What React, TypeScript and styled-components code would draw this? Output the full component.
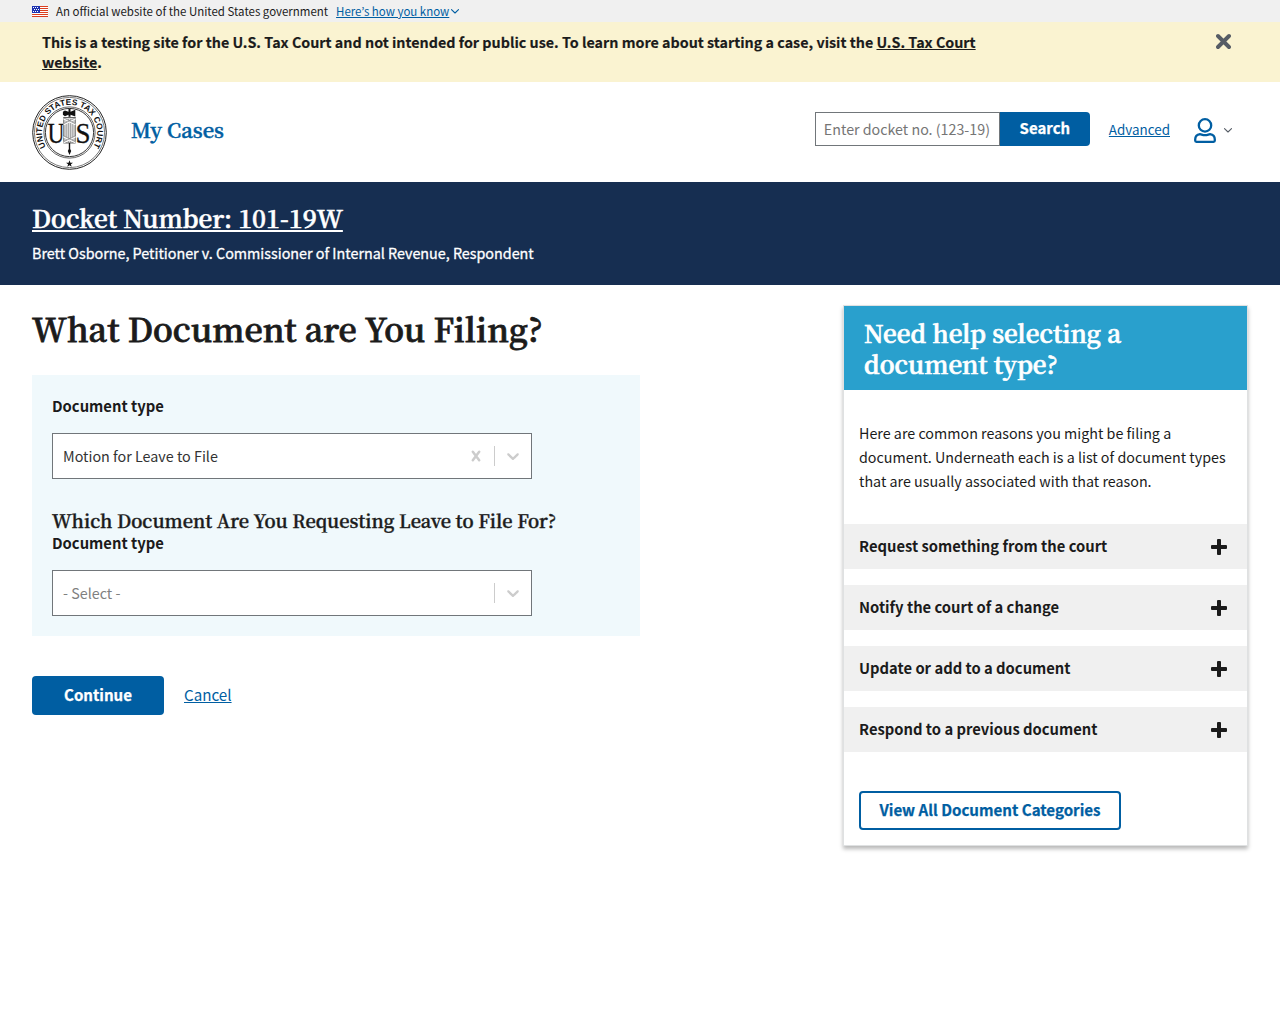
import React from "react";
import styled, { createGlobalStyle } from "styled-components";

const sans = '"Noto Sans CJK JP", "Noto Sans CJK SC", "Open Sans", sans-serif';
const serif = '"Noto Serif CJK JP", "Liberation Serif", serif';

const GlobalStyle = createGlobalStyle`
  * { box-sizing: border-box; }
  body { margin: 0; min-height: 1024px; background: #fff; color: #1b1b1b; font-family: ${sans}; font-size: 14.32px; }
  h1, h2, h3, p { margin: 0; }
  button, input { font-family: inherit; }
  a { color: #005ea2; text-underline-offset: 1px; }
`;

const GovBar = styled.div`
  display: flex;
  align-items: center;
  height: 22px;
  padding: 1px 32px 0;
  background: #f0f0f0;
  font-size: 11.47px;
  line-height: 21px;
  svg { display: block; }
`;
const GovText = styled.span`margin: 0 8px;`;
const GovLink = styled.a`display: flex; align-items: center; gap: 2px;`;

const TestBanner = styled.div`
  display: flex;
  justify-content: space-between;
  align-items: flex-start;
  height: 60px;
  padding: 10px 48px 0 42px;
  background: #faf3d1;
  font-weight: 700;
  font-size: 14.32px;
  line-height: 20px;
  -webkit-text-stroke: 0.15px;
  a { color: inherit; }
`;
const BannerText = styled.p`width: 960px;`;
const IconButton = styled.button`
  display: flex;
  align-items: center;
  padding: 0;
  border: 0;
  background: none;
`;
const CloseButton = styled(IconButton)`margin-top: 1px;`;

const Header = styled.header`
  display: flex;
  align-items: center;
  height: 100px;
  padding: 0 48px 0 32px;
`;
const NavLink = styled.a`
  margin: -4px auto 0 24px;
  font-family: ${serif};
  font-weight: 600;
  font-size: 20.26px;
  line-height: 28px;
  text-decoration: none;
  -webkit-text-stroke: 0.5px;
`;
const SearchForm = styled.form`display: flex; margin-top: -6px;`;
const SearchInput = styled.input`
  width: 185px;
  height: 34px;
  padding: 0 8px 2px;
  border: 1px solid #71767a;
  border-radius: 0;
  font-size: 14.28px;
  color: #1b1b1b;
  &::placeholder { color: #757575; opacity: 1; }
`;
const SearchButton = styled.button`
  width: 90px;
  height: 34px;
  padding: 0 0 2px;
  border: 0;
  border-radius: 0 4px 4px 0;
  background: #005ea2;
  color: #fff;
  font-weight: 700;
  font-size: 14.97px;
  line-height: 32px;
  -webkit-text-stroke: 0.25px;
`;
const AdvancedLink = styled.a`margin: -7px 24px 0 19px; font-size: 13.42px; line-height: 20px;`;
const AccountButton = styled(IconButton)`gap: 8px; margin-top: -3px;`;

const CaseBanner = styled.section`
  height: 103px;
  padding: 20px 32px 0;
  background: #162e51;
  color: #fff;
`;
const DocketTitle = styled.h2`
  font-family: ${serif};
  font-weight: 600;
  font-size: 24.37px;
  line-height: 32px;
  -webkit-text-stroke: 0.6px;
  a { color: inherit; text-decoration-thickness: 2px; text-underline-offset: 2px; }
`;
const CaseCaption = styled.p`
  margin-top: 7px;
  font-size: 14.34px;
  line-height: 24px;
  -webkit-text-stroke: 0.3px;
`;

const Main = styled.main`
  display: flex;
  justify-content: space-between;
  align-items: flex-start;
  padding: 20px 32px;
`;
const FilingColumn = styled.div`width: 608px;`;
const PageTitle = styled.h1`
  padding: 1px 0;
  font-family: ${serif};
  font-weight: 600;
  font-size: 32.36px;
  line-height: 44px;
  -webkit-text-stroke: 0.8px;
`;
const FormPanel = styled.section`
  height: 261px;
  margin-top: 24px;
  padding: 20px;
  background: #f0f9fc;
`;
const FieldLabel = styled.label`
  display: block;
  font-weight: 700;
  font-size: 14.8px;
  line-height: 22px;
`;
const SectionTitle = styled.h3`
  margin-top: 29px;
  font-family: ${serif};
  font-weight: 600;
  font-size: 18.24px;
  line-height: 24px;
  -webkit-text-stroke: 0.4px;
`;
const SelectBox = styled.div`
  display: flex;
  align-items: center;
  width: 480px;
  height: 46px;
  margin-top: 16px;
  padding: 0 8px 0 10px;
  border: 1px solid #71767a;
  background: #fff;
`;
const SelectValue = styled.span<{ $empty?: boolean }>`
  flex: 1;
  color: ${(p) => (p.$empty ? "#808080" : "#333")};
  font-size: 14.34px;
  line-height: 22px;
`;
const SelectDivider = styled.span`width: 1px; height: 20px; margin: 0 8px 0 10px; background: #ccc;`;

const Actions = styled.div`display: flex; align-items: center; margin-top: 40px; gap: 20px;`;
const PrimaryButton = styled.button`
  width: 132px;
  height: 39px;
  padding: 0 0 3px;
  border: 0;
  border-radius: 4px;
  background: #005ea2;
  color: #fff;
  font-weight: 700;
  font-size: 15.09px;
  -webkit-text-stroke: 0.25px;
`;
const CancelLink = styled.a`margin-top: -4px; font-size: 15.18px; line-height: 22px;`;

const HelpCard = styled.aside`
  width: 405px;
  height: 541px;
  border: 1px solid #dfe1e2;
  box-shadow: 0 3px 4px rgba(0, 0, 0, 0.28);
`;
const HelpTitle = styled.h2`
  height: 84px;
  padding: 11px 20px;
  background: #29a0cd;
  color: #fff;
  font-family: ${serif};
  font-weight: 600;
  font-size: 24.3px;
  line-height: 31px;
  -webkit-text-stroke: 0.7px;
`;
const HelpText = styled.p`
  width: 390px;
  padding: 31px 0 0 15px;
  font-size: 14.31px;
  line-height: 24px;
`;
const Accordion = styled.div`display: grid; gap: 16px; margin-top: 31px;`;
const AccordionRow = styled.button`
  display: flex;
  align-items: center;
  justify-content: space-between;
  height: 45px;
  padding: 0 20px 0 15px;
  border: 0;
  background: #f0f0f0;
  color: #1b1b1b;
  font-weight: 700;
  font-size: 14.77px;
`;
const RowLabel = styled.span`margin-top: -2px;`;
const OutlineButton = styled.button`
  width: 262px;
  height: 39px;
  margin: 39px 0 0 15px;
  padding: 0 0 3px;
  border: 2px solid #005ea2;
  border-radius: 4px;
  background: #fff;
  color: #005ea2;
  font-weight: 700;
  font-size: 15.1px;
  -webkit-text-stroke: 0.25px;
`;

const Flag = () => (
  <svg width="16" height="11" viewBox="0 0 16 11">
    <rect width="16" height="11" fill="#fff" />
    {[0, 2, 4, 6, 8, 10].map((y) => <rect key={y} y={y} width="16" height="1" fill="#db3e1f" />)}
    <rect width="8" height="7" fill="#1e33b1" />
    {[[1, 1], [3, 1], [5, 1], [2, 3], [4, 3], [6, 3], [1, 5], [3, 5], [5, 5]].map(([x, y]) => (
      <rect key={`${x}${y}`} x={x} y={y} width="1" height="1" fill="#fff" />
    ))}
  </svg>
);

const Chevron = ({ color, width = 8 }: { color: string; width?: number }) => (
  <svg width={width} height={width / 2 + 1} viewBox="0 0 8 5">
    <path d="M.5.7 4 4 7.5.7" fill="none" stroke={color} strokeWidth="1.1" strokeLinecap="round" strokeLinejoin="round" />
  </svg>
);

const SelectChevron = () => (
  <svg width="20" height="20" viewBox="0 0 20 20" fill="#ccc">
    <path d="M4.516 7.548c0.436-0.446 1.043-0.481 1.576 0l3.908 3.747 3.908-3.747c0.533-0.481 1.141-0.446 1.574 0 0.436 0.445 0.408 1.197 0 1.615-0.406 0.418-4.695 4.502-4.695 4.502-0.217 0.223-0.502 0.335-0.787 0.335s-0.57-0.112-0.789-0.335c0 0-4.287-4.084-4.695-4.502s-0.436-1.17 0-1.615z" />
  </svg>
);

const ClearIcon = () => (
  <svg width="16" height="12" viewBox="0 0 16 12">
    <path d="M4.8 1.8 11.2 10.2M11.2 1.8 4.8 10.2" stroke="#ccc" strokeWidth="2.5" strokeLinecap="round" />
  </svg>
);

const CloseIcon = () => (
  <svg width="17" height="16" viewBox="0 0 17 16">
    <path d="M3 3 14 14M14 3 3 14" stroke="#565c65" strokeWidth="3.9" strokeLinecap="round" />
  </svg>
);

const PlusIcon = () => (
  <svg width="16" height="16" viewBox="0 0 16 16" fill="#1b1b1b">
    <rect x="6" width="4" height="16" rx="1" />
    <rect y="6" width="16" height="4" rx="1" />
  </svg>
);

const UserIcon = () => (
  <svg width="22" height="25" viewBox="0 0 22 25" fill="none" stroke="#005ea2" strokeWidth="2.3">
    <circle cx="11" cy="7.4" r="6.2" />
    <path d="M6 16.2C3.2 16.6 1.2 18.8 1.2 21.6v1c0 .7.5 1.2 1.2 1.2h17.2c.7 0 1.2-.5 1.2-1.2v-1c0-2.8-2-5-4.8-5.4-1.2 0-2.6 1-5 1s-3.8-1-5-1z" />
  </svg>
);

const Seal = () => (
  <svg width="75" height="75" viewBox="0 0 75 75">
    <defs>
      <path id="seal-ring" d="M14.4 52.6A27.6 27.6 0 1 1 60.6 52.6" />
    </defs>
    <g fill="none" stroke="#222">
      <circle cx="37.5" cy="37.5" r="36.8" strokeWidth="1" />
      <circle cx="37.5" cy="37.5" r="35.1" strokeWidth=".6" />
      <circle cx="37.5" cy="37.5" r="25.6" strokeWidth=".7" />
      <circle cx="37.5" cy="37.5" r="24.1" strokeWidth=".9" />
    </g>
    <text fontFamily="Liberation Sans, sans-serif" fontWeight="700" fontSize="8.3" fill="#111">
      <textPath href="#seal-ring" startOffset="50%" textAnchor="middle" textLength="116">UNITED STATES TAX COURT</textPath>
    </text>
    <g fontFamily="Liberation Serif, serif" fontSize="30" fill="#111" stroke="#111" strokeWidth=".3">
      <text x="15.5" y="48" textLength="17" lengthAdjust="spacingAndGlyphs">U</text>
      <text x="43.5" y="48" textLength="15" lengthAdjust="spacingAndGlyphs">S</text>
    </g>
    <path d="M36.5 13.5h2v3.2l4.8-1.9v6.6l-4.8-1.7v2h-2v-2l-3.6 1.5-2-1.4v-3l2-1.4 3.6 1.4z" fill="#111" />
    <rect x="31.8" y="22.5" width="11.4" height="25.5" fill="#ddd" stroke="#444" strokeWidth=".8" />
    <path d="M34.2 24v24M36.4 24v24M38.6 24v24M40.8 24v24" stroke="#777" strokeWidth=".6" />
    <path d="m31.5 23.5 12 6m0-6-12 6m0 12 12 6m0-6-12 6" stroke="#fff" strokeWidth="1.8" />
    <path d="m31.5 22.8 12 6m0-6-12 6m0 12 12 6m0-6-12 6" stroke="#555" strokeWidth=".6" />
    <path d="M36.8 48h1.4v6l1 2-1.7 4-1.7-4 1-2z" fill="#111" />
    <path d="m37.5 65.3.9 2.4h2.6l-2.1 1.6.8 2.5-2.2-1.5-2.2 1.5.8-2.5-2.1-1.6h2.6z" fill="#111" />
  </svg>
);

const reasons = [
  "Request something from the court",
  "Notify the court of a change",
  "Update or add to a document",
  "Respond to a previous document",
];

export default function App() {
  return (
    <>
      <GlobalStyle />
      <GovBar>
        <Flag />
        <GovText>An official website of the United States government</GovText>
        <GovLink href="#">Here’s how you know <Chevron color="#005ea2" /></GovLink>
      </GovBar>
      <TestBanner>
        <BannerText>
          This is a testing site for the U.S. Tax Court and not intended for public use. To learn more about starting a case, visit the <a href="#">U.S. Tax Court website</a>.
        </BannerText>
        <CloseButton aria-label="Close"><CloseIcon /></CloseButton>
      </TestBanner>
      <Header>
        <Seal />
        <NavLink href="#">My Cases</NavLink>
        <SearchForm>
          <SearchInput placeholder="Enter docket no. (123-19)" />
          <SearchButton type="button">Search</SearchButton>
        </SearchForm>
        <AdvancedLink href="#">Advanced</AdvancedLink>
        <AccountButton aria-label="Account"><UserIcon /><Chevron color="#565c65" /></AccountButton>
      </Header>
      <CaseBanner>
        <DocketTitle><a href="#">Docket Number: 101-19W</a></DocketTitle>
        <CaseCaption>Brett Osborne, Petitioner v. Commissioner of Internal Revenue, Respondent</CaseCaption>
      </CaseBanner>
      <Main>
        <FilingColumn>
          <PageTitle>What Document are You Filing?</PageTitle>
          <FormPanel>
            <FieldLabel>Document type</FieldLabel>
            <SelectBox>
              <SelectValue>Motion for Leave to File</SelectValue>
              <ClearIcon />
              <SelectDivider />
              <SelectChevron />
            </SelectBox>
            <SectionTitle>Which Document Are You Requesting Leave to File For?</SectionTitle>
            <FieldLabel>Document type</FieldLabel>
            <SelectBox>
              <SelectValue $empty>- Select -</SelectValue>
              <SelectDivider />
              <SelectChevron />
            </SelectBox>
          </FormPanel>
          <Actions>
            <PrimaryButton>Continue</PrimaryButton>
            <CancelLink href="#">Cancel</CancelLink>
          </Actions>
        </FilingColumn>
        <HelpCard>
          <HelpTitle>Need help selecting a document type?</HelpTitle>
          <HelpText>
            Here are common reasons you might be filing a document. Underneath each is a list of document types that are usually associated with that reason.
          </HelpText>
          <Accordion>
            {reasons.map((reason) => (
              <AccordionRow key={reason}><RowLabel>{reason}</RowLabel><PlusIcon /></AccordionRow>
            ))}
          </Accordion>
          <OutlineButton>View All Document Categories</OutlineButton>
        </HelpCard>
      </Main>
    </>
  );
}
